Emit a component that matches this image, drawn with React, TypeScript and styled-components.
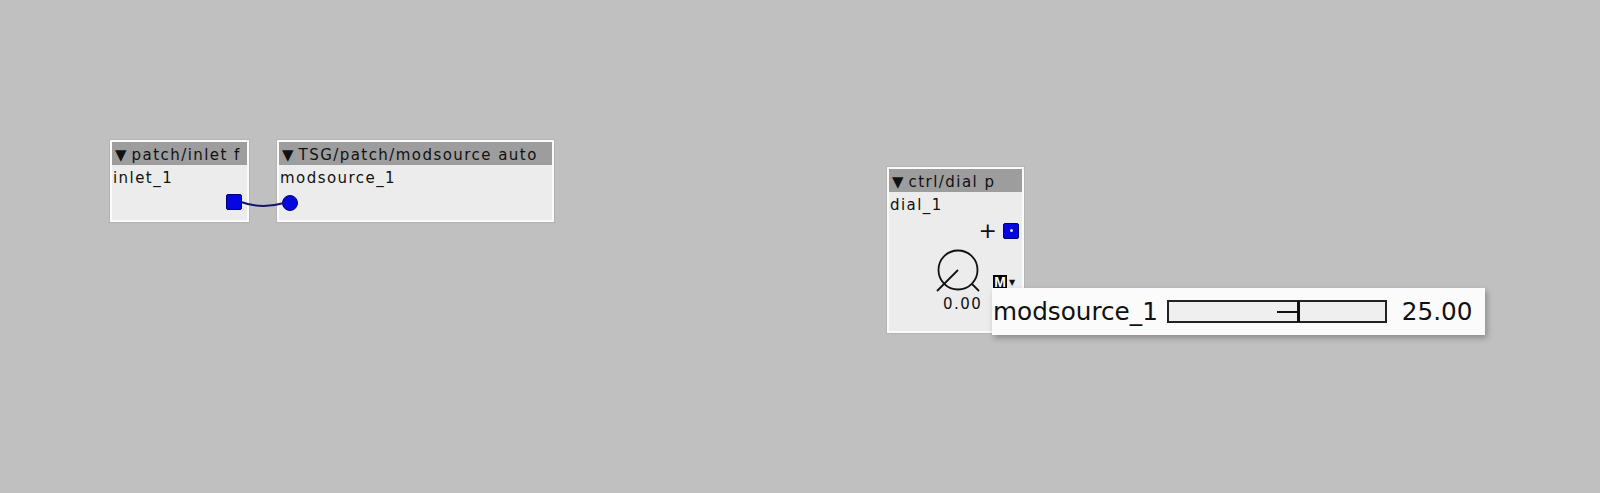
import React from "react";
import styled, { createGlobalStyle } from "styled-components";

const Global = createGlobalStyle`
  html, body { margin: 0; padding: 0; background: #c0c0c0; }
  body { font-family: "DejaVu Sans", "Liberation Sans", sans-serif; }
`;

const Canvas = styled.div`
  position: relative;
  width: 1600px;
  height: 493px;
  background: #c0c0c0;
  overflow: hidden;
`;

const ObjectBox = styled.div<{ $x: number; $y: number; $w: number; $h: number }>`
  position: absolute;
  left: ${(p) => p.$x}px;
  top: ${(p) => p.$y}px;
  width: ${(p) => p.$w}px;
  height: ${(p) => p.$h}px;
  box-sizing: border-box;
  border: 2px solid #fbfbfb;
  box-shadow: 0 0 0 1px #b4b4b4;
  background: #ececec;
  display: flex;
  flex-direction: column;
  font-family: "DejaVu Sans", sans-serif;
  font-size: 15px;
  letter-spacing: 1.45px;
  color: #111;
`;

const Header = styled.div`
  height: 23px;
  background: #9d9d9d;
  display: flex;
  align-items: flex-end;
  padding-left: 3px;
  line-height: 20px;
  white-space: nowrap;
  overflow: hidden;
`;

const Arrow = styled.span`
  font-size: 15px;
  margin-right: 5px;
  letter-spacing: 0;
`;

const InstanceName = styled.div`
  padding: 4px 0 0 1px;
  line-height: 18px;
  white-space: nowrap;
`;

const PortRow = styled.div<{ $justify: string; $mt: number; $pad: number }>`
  display: flex;
  align-items: center;
  justify-content: ${(p) => p.$justify};
  margin-top: ${(p) => p.$mt}px;
  padding: 0 ${(p) => p.$pad}px;
  gap: 6px;
`;

const Outlet = styled.div`
  width: 16px;
  height: 16px;
  box-sizing: border-box;
  background: #0606e0;
  border: 1px solid #00006e;
  border-radius: 2px;
  position: relative;
`;

const OutletDot = styled.span`
  position: absolute;
  left: 6px;
  top: 5px;
  width: 3px;
  height: 3px;
  background: #e6e6ff;
  border-radius: 50%;
`;

const Inlet = styled.div`
  width: 16px;
  height: 16px;
  box-sizing: border-box;
  background: #0606e0;
  border: 1px solid #00006e;
  border-radius: 50%;
`;

const Plus = styled.span`
  font-size: 22px;
  line-height: 16px;
  letter-spacing: 0;
  color: #111;
`;

const DialRow = styled.div`
  display: flex;
  align-items: flex-start;
  margin-top: 9px;
  padding-left: 37px;
`;

const DialColumn = styled.div`
  display: flex;
  flex-direction: column;
  align-items: flex-start;
`;

const DialValue = styled.div`
  margin: 1px 0 0 17px;
  line-height: 18px;
`;

const ModControl = styled.div`
  display: flex;
  align-items: center;
  margin-top: 27px;
  margin-left: 3px;
  gap: 2px;
`;

const MBadge = styled.span`
  width: 14px;
  height: 14px;
  background: #000;
  color: #fff;
  font-family: "Liberation Sans", sans-serif;
  font-size: 14px;
  font-weight: bold;
  letter-spacing: 0;
  line-height: 14px;
  text-align: center;
`;

const SmallTri = styled.span`
  font-size: 8px;
  letter-spacing: 0;
  color: #111;
`;

const Wire = styled.svg`
  position: absolute;
  left: 0;
  top: 0;
  pointer-events: none;
`;

const Popup = styled.div`
  position: absolute;
  left: 992px;
  top: 288px;
  width: 493px;
  height: 47px;
  box-sizing: border-box;
  background: #fbfbfb;
  box-shadow: 2px 3px 6px rgba(0, 0, 0, 0.28);
  display: flex;
  align-items: center;
  padding-left: 1px;
  font-family: "DejaVu Sans", sans-serif;
  font-size: 24.7px;
  color: #111;
`;

const PopupLabel = styled.span`
  white-space: nowrap;
`;

const Slider = styled.div`
  position: relative;
  width: 220px;
  height: 23px;
  box-sizing: border-box;
  margin-left: 9px;
  border: 2px solid #222;
  background: #efefef;
`;

const HandleBar = styled.span`
  position: absolute;
  top: -1px;
  bottom: -1px;
  width: 3px;
  background: #111;
`;

const HandleTick = styled.span`
  position: absolute;
  top: 9px;
  height: 2px;
  background: #111;
`;

const PopupValue = styled.span`
  margin-left: 15px;
`;

function Dial() {
  return (
    <svg width="64" height="46" viewBox="0 0 64 46">
      <circle cx="32" cy="22" r="19.5" fill="none" stroke="#111" strokeWidth="1.8" />
      <line x1="32" y1="22" x2="11" y2="43" stroke="#111" strokeWidth="1.8" />
      <line x1="46" y1="36" x2="53" y2="43" stroke="#111" strokeWidth="1.8" />
    </svg>
  );
}

export default function App() {
  const value = 25;
  const handleX = 128 + (value - 25) * 2;
  return (
    <>
      <Global />
      <Canvas>
        <ObjectBox $x={110} $y={140} $w={139} $h={82}>
          <Header>
            <Arrow>▼</Arrow>patch/inlet f
          </Header>
          <InstanceName>inlet_1</InstanceName>
          <PortRow $justify="flex-end" $mt={7} $pad={5}>
            <Outlet />
          </PortRow>
        </ObjectBox>

        <ObjectBox $x={277} $y={140} $w={277} $h={82}>
          <Header>
            <Arrow>▼</Arrow>TSG/patch/modsource auto
          </Header>
          <InstanceName>modsource_1</InstanceName>
          <PortRow $justify="flex-start" $mt={8} $pad={3}>
            <Inlet />
          </PortRow>
        </ObjectBox>

        <Wire width="1600" height="493">
          <path
            d="M241 202 C255 207 270 207 284 203"
            fill="none"
            stroke="#16166e"
            strokeWidth="2"
          />
        </Wire>

        <ObjectBox $x={887} $y={167} $w={137} $h={166}>
          <Header>
            <Arrow>▼</Arrow>ctrl/dial p
          </Header>
          <InstanceName>dial_1</InstanceName>
          <PortRow $justify="flex-end" $mt={9} $pad={3}>
            <Plus>+</Plus>
            <Outlet>
              <OutletDot />
            </Outlet>
          </PortRow>
          <DialRow>
            <DialColumn>
              <Dial />
              <DialValue>0.00</DialValue>
            </DialColumn>
            <ModControl>
              <MBadge>M</MBadge>
              <SmallTri>▼</SmallTri>
            </ModControl>
          </DialRow>
        </ObjectBox>

        <Popup>
          <PopupLabel>modsource_1</PopupLabel>
          <Slider>
            <HandleTick style={{ left: handleX - 20, width: 20 }} />
            <HandleBar style={{ left: handleX }} />
          </Slider>
          <PopupValue>25.00</PopupValue>
        </Popup>
      </Canvas>
    </>
  );
}
